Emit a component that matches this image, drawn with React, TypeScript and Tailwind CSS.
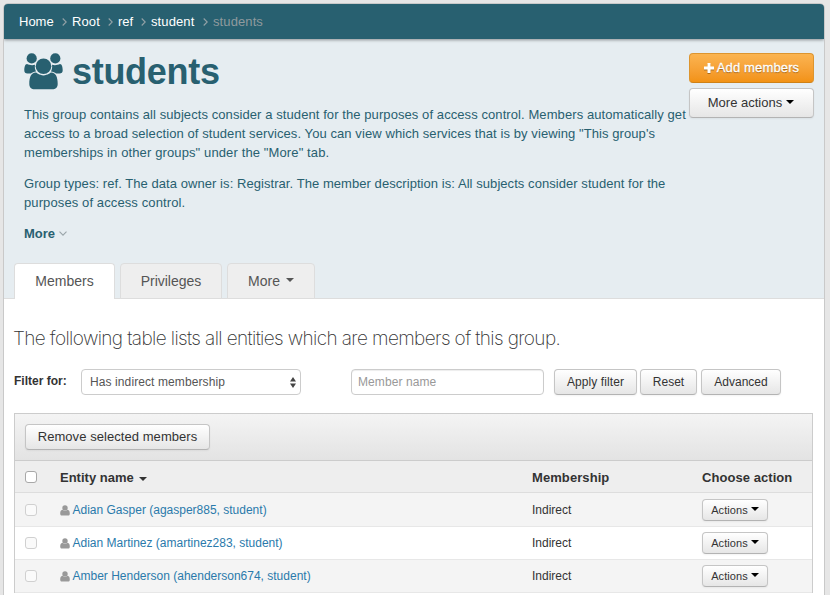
import React from "react";

const MEMBERS = [
  { label: "Adian Gasper (agasper885, student)", membership: "Indirect", row: "h-[34px] bg-[#f4f4f4] pt-px" },
  { label: "Adian Martinez (amartinez283, student)", membership: "Indirect", row: "h-[33px] bg-white" },
  { label: "Amber Henderson (ahenderson674, student)", membership: "Indirect", row: "h-[33px] bg-[#f4f4f4]" },
];

const BUTTON =
  "flex shrink-0 items-center justify-center whitespace-nowrap rounded-[4px] border border-[#c5c5c5] border-b-[#b3b3b3] bg-linear-to-b from-white to-[#e6e6e6] text-[#333] shadow-[inset_0_1px_0_rgba(255,255,255,0.2),0_1px_2px_rgba(0,0,0,0.05)]";

function Caret({ className }: { className: string }) {
  return (
    <svg className={className} width="8" height="4" viewBox="0 0 8 4" fill="currentColor">
      <path d="M0 0H8L4 4Z" />
    </svg>
  );
}

function Chevron() {
  return (
    <svg width="5" height="8" viewBox="0 0 5 8" fill="none" stroke="#93a1a6" strokeWidth="1.1">
      <path d="M0.7 0.5L4.2 4L0.7 7.5" />
    </svg>
  );
}

function GroupIcon() {
  return (
    <svg className="mt-px shrink-0" width="39" height="37" viewBox="0 0 39 37" fill="#286070">
      <path d="M3 11C1.2 11 0.3 14 0.3 17.3C0.3 19.5 1.5 20.6 3.4 20.6H6.9C8.2 19.3 10 18.6 12 18.4C10.9 16.4 10.6 14 11 11.8C8.6 12.4 5.2 12.2 3 11Z" />
      <path d="M36 11C37.8 11 38.7 14 38.7 17.3C38.7 19.5 37.5 20.6 35.6 20.6H32.1C30.8 19.3 29 18.6 27 18.4C28.1 16.4 28.4 14 28 11.8C30.4 12.4 33.8 12.2 36 11Z" />
      <circle cx="7.7" cy="5.4" r="5.1" />
      <circle cx="31.3" cy="5.4" r="5.1" />
      <circle cx="19.5" cy="13.2" r="7.8" />
      <path d="M11.8 19.6C7 19.8 5.3 24.5 5.3 31C5.3 34.4 7.4 36.3 10.7 36.3H28.3C31.6 36.3 33.7 34.4 33.7 31C33.7 24.5 32 19.8 27.2 19.6C26.3 19.6 23.8 22.4 19.5 22.4C15.2 22.4 12.7 19.6 11.8 19.6Z" />
    </svg>
  );
}

function PersonIcon() {
  return (
    <svg className="mr-[2.5px] shrink-0" width="10" height="11" viewBox="0 0 10 11" fill="#999">
      <circle cx="5" cy="2.9" r="2.7" />
      <path d="M2.5 4.8C0.7 5 0.2 6.7 0.2 8.7C0.2 10 1 10.6 2 10.6H8C9 10.6 9.8 10 9.8 8.7C9.8 6.7 9.3 5 7.5 4.8C6.3 6.1 3.7 6.1 2.5 4.8Z" />
    </svg>
  );
}

function Checkbox({ strong = false }: { strong?: boolean }) {
  return (
    <span
      className={
        strong
          ? "h-3 w-3 shrink-0 rounded-[3px] border border-[#a8a8a8] bg-white"
          : "h-3 w-3 shrink-0 rounded-[3px] border border-[#d0d0d0] bg-[#fafafa]"
      }
    />
  );
}

function Breadcrumbs() {
  return (
    <nav className="relative flex h-[35px] items-center bg-[#286070] pl-[15px] text-[13px] leading-none text-white shadow-[0_1px_3px_rgba(0,0,0,0.4)]">
      <span className="w-[43px]">Home</span>
      <Chevron />
      <span className="ml-[5px] w-9 tracking-[0.1px]">Root</span>
      <Chevron />
      <span className="ml-[5px] w-[23px]">ref</span>
      <Chevron />
      <span className="ml-[5px] w-[52px] tracking-[0.1px]">student</span>
      <Chevron />
      <span className="ml-[5px] tracking-[0.1px] text-[#8f9a9e]">students</span>
    </nav>
  );
}

function Hero() {
  return (
    <header className="flex h-[260px] flex-col border-b border-[#ddd] bg-[#e6edf1]">
      <div className="flex h-[224px] text-[#286070]">
        <div className="w-[666px] shrink-0 pl-5 pt-[13px]">
          <div className="flex h-[39px] items-start">
            <GroupIcon />
            <h1 className="ml-[9px] text-[36px] font-bold leading-10 tracking-[-0.3px]">students</h1>
          </div>
          <div className="mt-[14px] whitespace-nowrap text-[13px] leading-[19px]">
            <p className="tracking-[0.083px]">This group contains all subjects consider a student for the purposes of access control. Members automatically get</p>
            <p className="tracking-[0.083px]">access to a broad selection of student services. You can view which services that is by viewing "This group's</p>
            <p className="tracking-[0.12px]">memberships in other groups" under the "More" tab.</p>
            <p className="mt-3 tracking-[0.06px]">Group types: ref. The data owner is: Registrar. The member description is: All subjects consider student for the</p>
            <p className="tracking-[0.11px]">purposes of access control.</p>
            <p className="mt-3 flex items-center font-bold">
              More
              <svg className="ml-1" width="8" height="5" viewBox="0 0 8 5" fill="none" stroke="#9aa5a9" strokeWidth="1.1">
                <path d="M0.5 0.6L4 4.1L7.5 0.6" />
              </svg>
            </p>
          </div>
        </div>
        <div className="ml-[19px] flex w-[125px] shrink-0 flex-col gap-[5px] pt-[14px]">
          <button className="flex h-[30px] items-center justify-center rounded-[4px] border border-[#dd952f] border-b-[#cf8116] bg-linear-to-b from-[#fbb450] to-[#f29214] text-[13px] tracking-[0.15px] text-white [-webkit-text-stroke:0.3px_white] [text-shadow:0_1px_1px_rgba(0,0,0,0.4)]">
            <svg className="mr-[3px] drop-shadow-[0_1px_0.5px_rgba(0,0,0,0.3)]" width="10" height="10" viewBox="0 0 10 10" fill="currentColor">
              <path d="M3.5 0H6.5V3.5H10V6.5H6.5V10H3.5V6.5H0V3.5H3.5Z" />
            </svg>
            Add members
          </button>
          <button className={`${BUTTON} h-[30px] pr-px text-[13px]`}>
            More actions
            <Caret className="mb-[2px] ml-1 text-black" />
          </button>
        </div>
      </div>
      <div className="-mb-px flex h-9 gap-[5px] pl-[10px] text-[14px] text-[#555]">
        <div className="flex w-[101px] items-center justify-center rounded-t-[4px] border border-b-0 border-[#ddd] bg-white">Members</div>
        <div className="flex w-[102px] items-center justify-center rounded-t-[4px] border border-[#ddd] bg-[#eee]">Privileges</div>
        <div className="flex w-[88px] items-center justify-center rounded-t-[4px] border border-[#ddd] bg-[#eee]">
          More
          <Caret className="mb-[3px] ml-[6px]" />
        </div>
      </div>
    </header>
  );
}

function Filters() {
  return (
    <div className="mt-[17px] flex h-[26px] items-center text-[12px] text-[#333]">
      <span className="mb-[3px] w-[67px] font-bold">Filter for:</span>
      <div className="flex h-[26px] w-[220px] items-center justify-between rounded-[4px] border border-[#ccc] bg-white pl-2 pr-[4px] text-[#555]">
        <span className="tracking-[0.1px]">Has indirect membership</span>
        <svg width="6" height="11" viewBox="0 0 6 11" fill="#444">
          <path d="M0 4.5L3 0L6 4.5ZM0 6.5H6L3 11Z" />
        </svg>
      </div>
      <div className="ml-[50px] flex h-[26px] w-[193px] items-center rounded-[4px] border border-[#ccc] bg-white pl-[6px] tracking-[0.08px] text-[#999] shadow-[inset_0_1px_1px_rgba(0,0,0,0.075)]">
        Member name
      </div>
      <button className={`${BUTTON} ml-[10px] h-[26px] w-[83px] tracking-[0.1px]`}>Apply filter</button>
      <button className={`${BUTTON} ml-[3px] h-[26px] w-[57px]`}>Reset</button>
      <button className={`${BUTTON} ml-[4px] h-[26px] w-[80px]`}>Advanced</button>
    </div>
  );
}

function MembersTable() {
  return (
    <section className="mt-[18px] w-[799px] border-x border-t border-[#ccc] text-[#333]">
      <div className="flex h-[47px] items-center border-b border-[#ccc] bg-linear-to-b from-[#f4f4f4] to-[#e3e3e3] pl-[10px]">
        <button className={`${BUTTON} h-[26px] w-[185px] text-[13px] tracking-[0.06px]`}>Remove selected members</button>
      </div>
      <div className="flex h-8 items-center border-b border-[#ddd] bg-[#eee] pl-[10px] text-[13px] font-bold">
        <Checkbox strong />
        <span className="ml-[23px] flex w-[472px] items-center pt-0.5">
          Entity name
          <Caret className="ml-[5px] mt-[2px]" />
        </span>
        <span className="w-[170px] pt-[3px] tracking-[0.08px]">Membership</span>
        <span className="pt-[3px] tracking-[0.06px]">Choose action</span>
      </div>
      {MEMBERS.map((m) => (
        <div key={m.label} className={`flex items-center border-b border-[#e7e7e7] pl-[10px] text-[12px] ${m.row}`}>
          <Checkbox />
          <span className="ml-[23px] flex w-[472px] items-center text-[#2a7aab]">
            <PersonIcon />
            {m.label}
          </span>
          <span className="w-[170px]">{m.membership}</span>
          <button className={`${BUTTON} h-[22px] w-[66px] text-[11px] tracking-[0.08px]`}>
            Actions
            <Caret className="mb-[3px] ml-[3px] text-black" />
          </button>
        </div>
      ))}
    </section>
  );
}

export default function App() {
  return (
    <div className="h-[595px] w-[830px] overflow-hidden bg-[#e6e6e6] pt-[3px] font-['Liberation_Sans',Arial,sans-serif]">
      <main className="ml-[3px] h-[600px] w-[822px] overflow-hidden rounded-t-[5px] border border-[#c9c9c9] bg-white">
        <Breadcrumbs />
        <Hero />
        <div className="pl-[10px] pt-[27px]">
          <h2 className="-ml-px h-[26px] whitespace-nowrap font-[Inter,sans-serif] text-[19px] font-extralight leading-[26px] tracking-[-0.62px] text-[#333]">
            The following table lists all entities which are members of this group.
          </h2>
          <Filters />
          <MembersTable />
        </div>
      </main>
    </div>
  );
}
